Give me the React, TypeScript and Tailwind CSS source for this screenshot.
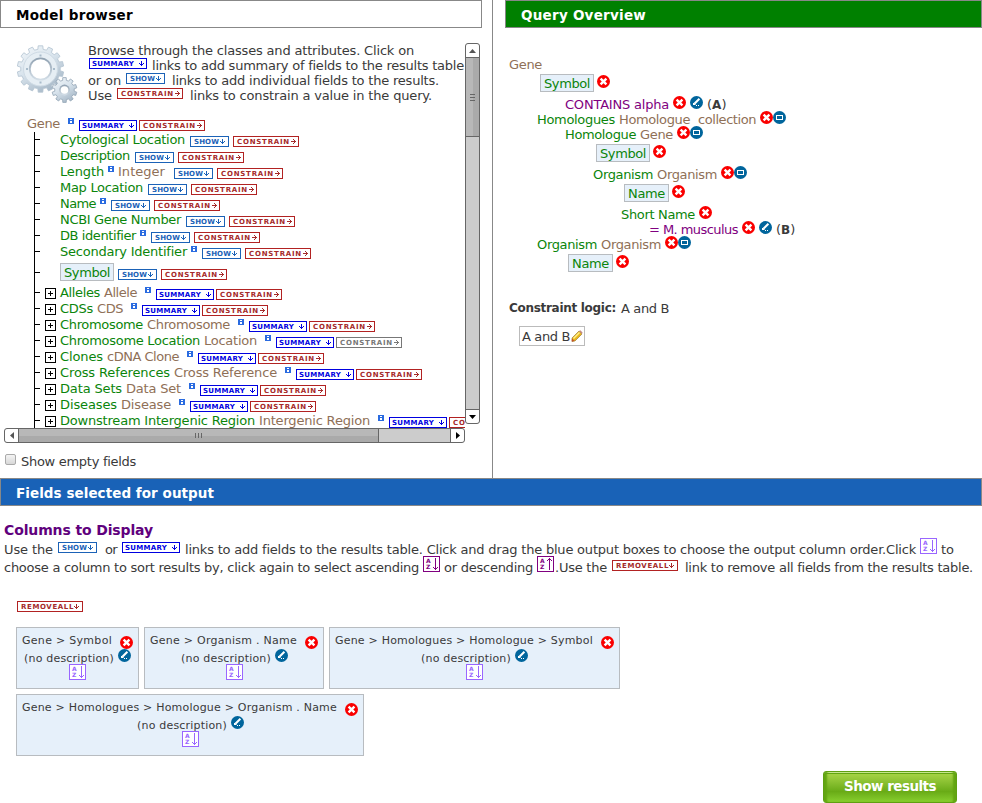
import React, { useLayoutEffect, useRef } from "react";

/* A single line of text, spaced evenly so that it fills its box. */
function Fit({ className = "", children }: { className?: string; children: string }) {
  const box = useRef<HTMLSpanElement>(null);
  const text = useRef<HTMLSpanElement>(null);
  useLayoutEffect(() => {
    if (!box.current || !text.current) return;
    text.current.style.letterSpacing = "0px";
    const natural = text.current.getBoundingClientRect().width;
    const gap = (box.current.getBoundingClientRect().width - natural) / children.length;
    text.current.style.letterSpacing = `${gap}px`;
  }, [children]);
  return (
    <span ref={box} className={`block shrink-0 whitespace-pre ${className}`}>
      <span ref={text}>{children}</span>
    </span>
  );
}

const GREEN = "text-[#0b850b]";
const BROWN = "text-[#8f7057]";
const PURPLE = "text-[#800080]";

function Arrow({ right = false, className = "" }: { right?: boolean; className?: string }) {
  return (
    <svg width="5" height="5" viewBox="0 0 5 5" shapeRendering="crispEdges" className={`shrink-0 ${className}`} fill="currentColor">
      {right ? (
        <path d="M0 2h5v1H0zM3 1h1v3H3zM2 0h1v1H2zM2 4h1v1H2z" />
      ) : (
        <path d="M2 0h1v5H2zM1 3h3v1H1zM0 2h1v1H0zM4 2h1v1H4z" />
      )}
    </svg>
  );
}

type Kind = "summary" | "show" | "constrain" | "remove";

function Tag({ kind, className = "", disabled = false }: { kind: Kind; className?: string; disabled?: boolean }) {
  const base = "flex h-[11px] shrink-0 items-start border bg-white text-[7px] font-bold leading-[9px]";
  if (kind === "summary")
    return (
      <span className={`${base} w-[58px] border-[#0000e0] pl-[2px] text-[#0000e0] ${className}`}>
        <Fit className="w-[42px] pt-[0.5px]">SUMMARY</Fit>
        <Arrow className="ml-[5px] mt-[2px]" />
      </span>
    );
  if (kind === "show")
    return (
      <span className={`${base} w-[39px] border-[#1b62b7] pl-[3px] text-[#1b62b7] ${className}`}>
        <Fit className="w-[25px] pt-[0.5px]">SHOW</Fit>
        <Arrow className="ml-[1px] mt-[2px]" />
      </span>
    );
  if (kind === "remove")
    return (
      <span className={`${base} w-[66px] border-[#b22222] pl-[3px] text-[#a52a2a] ${className}`}>
        <Fit className="w-[53px] pt-[0.5px]">REMOVEALL</Fit>
        <Arrow className="mt-[2px]" />
      </span>
    );
  return (
    <span className={`${base} w-[66px] pl-[3px] ${disabled ? "border-[#777777] text-[#777777]" : "border-[#b22222] text-[#a52a2a]"} ${className}`}>
      <Fit className="w-[53px] pt-[0.5px]">CONSTRAIN</Fit>
      <Arrow right className="ml-[1px] mt-[2px]" />
    </span>
  );
}

function Info({ className = "" }: { className?: string }) {
  return (
    <svg width="6" height="6" viewBox="0 0 6 6" shapeRendering="crispEdges" className={`shrink-0 ${className}`}>
      <rect width="6" height="6" rx="1" fill="#2a6be0" />
      <path d="M2 1h2v1H2zM2 3h2v2H2z" fill="#fff" />
    </svg>
  );
}

function Remove({ className = "" }: { className?: string }) {
  return (
    <svg width="13" height="13" viewBox="0 0 13 13" className={`shrink-0 ${className}`}>
      <circle cx="6.5" cy="6.5" r="6.5" fill="#fa0000" />
      <path d="M3.6 3.6l5.8 5.8M9.4 3.6l-5.8 5.8" stroke="#fff" strokeWidth="2.4" />
    </svg>
  );
}

function Edit({ className = "" }: { className?: string }) {
  return (
    <svg width="13" height="13" viewBox="0 0 13 13" className={`shrink-0 ${className}`}>
      <circle cx="6.5" cy="6.5" r="6.5" fill="#00659c" />
      <path d="M9.4 2.8L4.4 7.8" stroke="#fff" strokeWidth="2" />
      <path d="M3 7h1l1.6 1.6V9H3zM6 9h1v1H6zM8 9h1v1H8z" fill="#fff" />
    </svg>
  );
}

function Box({ className = "" }: { className?: string }) {
  return (
    <svg width="13" height="13" viewBox="0 0 13 13" className={`shrink-0 ${className}`}>
      <circle cx="6.5" cy="6.5" r="6.5" fill="#00659c" />
      <rect x="3.5" y="4.5" width="6" height="4" fill="none" stroke="#fff" />
    </svg>
  );
}

function Sort({ className = "", up = false }: { className?: string; up?: boolean }) {
  return (
    <span className={`flex h-4 w-[17px] shrink-0 border border-current bg-white pl-[2px] pt-[1px] ${className}`}>
      <span className="flex w-[5px] flex-col text-[6px] font-bold leading-[6px]">
        <span>A</span>
        <span>Z</span>
      </span>
      <svg width="7" height="12" viewBox="0 0 7 12" shapeRendering="crispEdges" fill="currentColor" className="ml-[1px]">
        {up ? (
          <path d="M3 0h1v12H3zM2 1h3v1H2zM1 2h1v1H1zM5 2h1v1H5z" />
        ) : (
          <path d="M3 0h1v12H3zM2 10h3v1H2zM1 9h1v1H1zM5 9h1v1H5z" />
        )}
      </svg>
    </span>
  );
}

function gearPath(cx: number, cy: number, teeth: number, outer: number, inner: number) {
  const step = (Math.PI * 2) / teeth;
  const at = (r: number, a: number) => `${(cx + r * Math.cos(a)).toFixed(2)} ${(cy + r * Math.sin(a)).toFixed(2)}`;
  let d = "";
  for (let i = 0; i < teeth; i++) {
    const a = i * step - Math.PI / 2;
    d += `${i ? "L" : "M"}${at(inner, a - step * 0.3)}L${at(outer, a - step * 0.22)}L${at(outer, a + step * 0.22)}L${at(inner, a + step * 0.3)}`;
  }
  return d + "Z";
}

function Gears() {
  return (
    <svg width="62" height="60" viewBox="16 44 62 60" className="shrink-0">
      <defs>
        <linearGradient id="steel" x1="0" y1="0" x2="0.6" y2="1">
          <stop offset="0" stopColor="#f3f7fa" />
          <stop offset="0.5" stopColor="#d9e4ed" />
          <stop offset="1" stopColor="#a9bac9" />
        </linearGradient>
        <linearGradient id="rim" x1="0" y1="0" x2="0" y2="1">
          <stop offset="0" stopColor="#8fa0b0" />
          <stop offset="1" stopColor="#d5e0e9" />
        </linearGradient>
      </defs>
      <path d={gearPath(40.5, 69, 14, 23.3, 19.8)} fill="url(#steel)" stroke="#b3c3d0" strokeWidth="0.8" />
      <circle cx="40.5" cy="69" r="17" fill="#e6eef4" stroke="#cfdbe5" strokeWidth="1" />
      <circle cx="40.5" cy="69" r="11.6" fill="url(#rim)" />
      <circle cx="40.5" cy="69" r="9.8" fill="#fff" />
      <path d="M39.5 54.500h2v2h-2zM39.5 81.500h2v2h-2zM26 68h2v2h-2zM53 68h2v2h-2z" fill="#a9bccb" />
      <path d={gearPath(64.5, 90, 10, 12.5, 9.8)} fill="url(#steel)" stroke="#93a5b5" strokeWidth="0.8" />
      <circle cx="64.5" cy="90" r="5.4" fill="url(#rim)" />
      <circle cx="64.500" cy="90" r="3.8" fill="#fff" />
    </svg>
  );
}

function Plus() {
  return (
    <svg width="11" height="11" viewBox="0 0 11 11" shapeRendering="crispEdges" className="shrink-0">
      <rect x="0.5" y="0.5" width="10" height="10" fill="#fff" stroke="#000" />
      <path d="M3 5h5v1H3zM5 3h1v5H5z" fill="#000" />
    </svg>
  );
}

interface Field {
  name: string;
  w: string;
  type?: string;
  tw?: string;
  info?: string;
  gap: string;
}

const fields: Field[] = [
  { name: "Cytological Location", w: "w-[125px]", gap: "ml-[5px]" },
  { name: "Description", w: "w-[70px]", gap: "ml-[5px]" },
  { name: "Length", w: "w-[44px]", info: "ml-[4px]", type: "Integer", tw: "w-[47px] ml-[4px]", gap: "ml-[9px]" },
  { name: "Map Location", w: "w-[83px]", gap: "ml-[5px]" },
  { name: "Name", w: "w-[36px]", info: "ml-[4px]", gap: "ml-[5px]" },
  { name: "NCBI Gene Number", w: "w-[121px]", gap: "ml-[5px]" },
  { name: "DB identifier", w: "w-[76px]", info: "ml-[4px]", gap: "ml-[5px]" },
  { name: "Secondary Identifier", w: "w-[127px]", info: "ml-[4px]", gap: "ml-[5px]" },
];

const references = [
  { name: "Alleles", w: "w-[40px]", type: "Allele", tw: "w-[33px]" },
  { name: "CDSs", w: "w-[33px]", type: "CDS", tw: "w-[26px]" },
  { name: "Chromosome", w: "w-[83px]", type: "Chromosome", tw: "w-[83px]" },
  { name: "Chromosome Location", w: "w-[140px]", type: "Location", tw: "w-[53px]", disabled: true },
  { name: "Clones", w: "w-[43px]", type: "cDNA Clone", tw: "w-[72px]" },
  { name: "Cross References", w: "w-[110px]", type: "Cross Reference", tw: "w-[103px]" },
  { name: "Data Sets", w: "w-[62px]", type: "Data Set", tw: "w-[55px]" },
  { name: "Diseases", w: "w-[57px]", type: "Disease", tw: "w-[50px]" },
  { name: "Downstream Intergenic Region", w: "w-[195px]", type: "Intergenic Region", tw: "w-[111px]" },
];

function Branch({ children, tall = false }: { children: React.ReactNode; tall?: boolean }) {
  return (
    <div className={`flex items-start ${tall ? "h-[25px]" : "h-4"}`}>
      <i className={`h-px w-[5px] shrink-0 bg-black ${tall ? "mt-[12px]" : "mt-[7px]"}`} />
      {children}
    </div>
  );
}

function Chip({ name, className = "" }: { name: string; className?: string }) {
  return (
    <span className={`flex h-[18px] shrink-0 items-center border border-[#b8bcc0] bg-[#e6f0fa] pl-[3px] leading-[15px] ${GREEN} ${name === "Name" ? "w-[45px]" : "w-[54px]"} ${className}`}>
      <Fit className={name === "Name" ? "w-[37px]" : "w-[46px]"}>{name}</Fit>
    </span>
  );
}

function Heading({ children, w, className }: { children: string; w: string; className: string }) {
  return (
    <h2 className={`flex h-7 shrink-0 items-start border border-[#888888] pl-[15px] pt-[5px] text-[13.5px] font-bold leading-[18px] ${className}`}>
      <Fit className={w}>{children}</Fit>
    </h2>
  );
}

function ModelBrowser() {
  return (
    <section className="h-[478px] w-[493px] shrink-0 border-r border-[#888888]">
      <Heading w="w-[117px]" className="w-[482px] text-black">Model browser</Heading>
      <div className="mt-[15px] flex pl-1">
        <div className="h-[385px] w-[461px] overflow-hidden">
          <div className="flex h-[73px]">
            <div className="w-[84px] shrink-0 pl-3 pt-[1px]"><Gears /></div>
            <div className="leading-[15px]">
              <div className="flex h-[15px]"><Fit className="w-[326px]">Browse through the classes and attributes. Click on</Fit></div>
              <div className="flex h-[15px]">
                <Tag kind="summary" className="ml-[1px]" />
                <Fit className="ml-[5px] w-[312px]">links to add summary of fields to the results table</Fit>
              </div>
              <div className="flex h-[15px]">
                <Fit className="w-[33px]">or on</Fit>
                <Tag kind="show" className="ml-[5px]" />
                <Fit className="ml-[7px] w-[267px]">links to add individual fields to the results.</Fit>
              </div>
              <div className="flex h-[15px]">
                <Fit className="w-[24px]">Use</Fit>
                <Tag kind="constrain" className="ml-[5px]" />
                <Fit className="ml-[7px] w-[242px]">links to constrain a value in the query.</Fit>
              </div>
            </div>
          </div>
          <div className="flex h-4 pl-[23px] leading-[15px]">
            <Fit className={`w-[33px] ${BROWN}`}>Gene</Fit>
            <Info className="ml-[8px] mt-[2px]" />
            <Tag kind="summary" className="ml-[5px] mt-[4px]" />
            <Tag kind="constrain" className="ml-[2px] mt-[4px]" />
          </div>
          <div className="ml-[30px] border-l border-black leading-[15px]">
            {fields.map((f) => (
              <Branch key={f.name}>
                <Fit className={`ml-[20px] ${f.w} ${GREEN}`}>{f.name}</Fit>
                {f.info && <Info className={`mt-[2px] ${f.info}`} />}
                {f.type && <Fit className={`${f.tw} ${BROWN}`}>{f.type}</Fit>}
                <Tag kind="show" className={`mt-[4px] ${f.gap}`} />
                <Tag kind="constrain" className="ml-[4px] mt-[4px]" />
              </Branch>
            ))}
            <Branch tall>
              <Chip name="Symbol" className="ml-[20px] mt-[3px]" />
              <Tag kind="show" className="ml-[4px] mt-[9px]" />
              <Tag kind="constrain" className="ml-[4px] mt-[9px]" />
            </Branch>
            {references.map((r) => (
              <Branch key={r.name}>
                <span className="ml-[5px] mt-[3px] flex"><Plus /></span>
                <Fit className={`ml-[4px] ${r.w} ${GREEN}`}>{r.name}</Fit>
                <Fit className={`ml-[4px] ${r.tw} ${BROWN}`}>{r.type}</Fit>
                <Info className="ml-[8px] mt-[2px]" />
                <Tag kind="summary" className="ml-[5px] mt-[4px]" />
                <Tag kind="constrain" className="ml-[2px] mt-[4px]" disabled={r.disabled} />
              </Branch>
            ))}
          </div>
        </div>
        <div className="flex h-[381px] w-[15px] flex-col rounded-[3px] border border-[#666666] bg-[#cccccc]">
          <span className="flex h-[14px] items-center justify-center rounded-t-[3px] border-b border-[#666666] bg-white">
            <svg width="7" height="4"><path d="M3.5 0L7 4H0z" fill="#555" /></svg>
          </span>
          <span className="flex h-[79px] items-center justify-center border-b border-[#666666] bg-linear-to-r from-[#b8b8b8] from-50% to-[#aaaaaa] to-50%">
            <svg width="5" height="7" fill="#666"><path d="M0 0h5v1H0zM0 3h5v1H0zM0 6h5v1H0z" /></svg>
          </span>
          <span className="mt-auto flex h-[14px] items-center justify-center rounded-b-[3px] border-t border-[#666666] bg-white">
            <svg width="7" height="4"><path d="M3.5 4L7 0H0z" /></svg>
          </span>
        </div>
      </div>
      <div className="ml-1 flex h-[15px] w-[461px] rounded-[3px] border border-[#666666] bg-[#cccccc]">
        <span className="flex w-[14px] items-center justify-center rounded-l-[3px] border-r border-[#666666] bg-white">
          <svg width="4" height="7"><path d="M4 0v7L0 3.5z" fill="#555" /></svg>
        </span>
        <span className="flex w-[360px] items-center justify-center border-r border-[#666666] bg-linear-to-b from-[#b8b8b8] from-50% to-[#aaaaaa] to-50%">
          <svg width="7" height="5" fill="#666"><path d="M0 0h1v5H0zM3 0h1v5H3zM6 0h1v5H6z" /></svg>
        </span>
        <span className="ml-auto flex w-[14px] items-center justify-center rounded-r-[3px] border-l border-[#666666] bg-white">
          <svg width="4" height="7"><path d="M0 0v7l4-3.5z" /></svg>
        </span>
      </div>
      <div className="mt-[11px] flex pl-[5px] leading-[15px]">
        <span className="h-[11px] w-[11px] rounded-[2px] border border-[#aaaaaa] bg-linear-to-b from-[#f4f4f4] to-[#d8d8d8]" />
        <Fit className="ml-[5px] w-[115px]">Show empty fields</Fit>
      </div>
    </section>
  );
}

function QueryOverview() {
  const row = "flex h-[15px]";
  const chipRow = "flex h-[25px] pt-[2px]";
  return (
    <section className="flex-1 pl-3">
      <Heading w="w-[125px]" className="bg-[#008000] text-white">Query Overview</Heading>
      <div className="pl-1 pt-[29px] leading-[15px]">
        <div className={row}><Fit className={`w-[33px] ${BROWN}`}>Gene</Fit></div>
        <div className={`${chipRow} pl-[31px]`}><Chip name="Symbol" /><Remove className="ml-[3px] mt-[1px]" /></div>
        <div className={`${row} pl-[56px]`}>
          <Fit className={`w-[104px] ${PURPLE}`}>CONTAINS alpha</Fit>
          <Remove className="-mt-px ml-[4px]" />
          <Edit className="-mt-px ml-[4px]" />
          <span className="ml-[4px]">(<b className="text-[12px]">A</b>)</span>
        </div>
        <div className={`${row} pl-[28px]`}>
          <Fit className={`w-[78px] ${GREEN}`}>Homologues</Fit>
          <Fit className={`ml-[4px] w-[71px] ${BROWN}`}>Homologue</Fit>
          <Fit className={`ml-[8px] w-[58px] ${BROWN}`}>collection</Fit>
          <Remove className="-mt-px ml-[4px]" /><Box className="-mt-px" />
        </div>
        <div className={`${row} pl-[56px]`}>
          <Fit className={`w-[71px] ${GREEN}`}>Homologue</Fit>
          <Fit className={`ml-[4px] w-[33px] ${BROWN}`}>Gene</Fit>
          <Remove className="-mt-px ml-[4px]" /><Box className="-mt-px" />
        </div>
        <div className={`${chipRow} pl-[87px]`}><Chip name="Symbol" /><Remove className="ml-[3px] mt-[1px]" /></div>
        <div className={`${row} pl-[84px]`}>
          <Fit className={`w-[60px] ${GREEN}`}>Organism</Fit>
          <Fit className={`ml-[4px] w-[60px] ${BROWN}`}>Organism</Fit>
          <Remove className="-mt-px ml-[4px]" /><Box className="-mt-px" />
        </div>
        <div className={`${chipRow} pl-[115px]`}><Chip name="Name" /><Remove className="ml-[3px] mt-[1px]" /></div>
        <div className={`${row} pl-[112px]`}>
          <Fit className={`w-[74px] ${GREEN}`}>Short Name</Fit>
          <Remove className="-mt-px ml-[4px]" />
        </div>
        <div className={`${row} pl-[140px]`}>
          <Fit className={`w-[89px] ${PURPLE}`}>= M. musculus</Fit>
          <Remove className="-mt-px ml-[4px]" />
          <Edit className="-mt-px ml-[4px]" />
          <span className="ml-[4px]">(<b className="text-[12px]">B</b>)</span>
        </div>
        <div className={`${row} pl-[28px]`}>
          <Fit className={`w-[60px] ${GREEN}`}>Organism</Fit>
          <Fit className={`ml-[4px] w-[60px] ${BROWN}`}>Organism</Fit>
          <Remove className="-mt-px ml-[4px]" /><Box className="-mt-px" />
        </div>
        <div className={`${chipRow} pl-[59px]`}><Chip name="Name" /><Remove className="ml-[3px] mt-[1px]" /></div>
        <div className="mt-[24px] flex">
          <Fit className="w-[107px] text-[12px] font-bold">Constraint logic:</Fit>
          <Fit className="ml-[5px] w-[48px]">A and B</Fit>
        </div>
        <div className="ml-[10px] mt-[10px] flex h-5 w-[66px] items-center border border-[#bbbbbb] pl-[2px]">
          <Fit className="w-[48px]">A and B</Fit>
          <svg width="12" height="12" viewBox="0 0 12 12" className="ml-[1px]">
            <path d="M1 8L8 1l3 3-7 7-3 .5z" fill="#e8b71d" stroke="#7d5a20" strokeWidth="0.5" />
            <path d="M2.5 8.5l6-6" stroke="#fff08a" strokeWidth="1.4" />
            <path d="M8 1l1.3-.7 2.3 2.3L11 4z" fill="#c58a80" />
            <path d="M.7 11.500L1 8.500l2.500 2.500z" fill="#c4512a" />
          </svg>
        </div>
      </div>
    </section>
  );
}

const cards = [
  { name: "Gene > Symbol", w: "w-[123px]", tw: "w-[90px]", pad: "pl-[7px]", sort: "ml-[52px]" },
  { name: "Gene > Organism . Name", w: "w-[180px]", tw: "w-[147px]", pad: "pl-[36px]", sort: "ml-[81px]" },
  { name: "Gene > Homologues > Homologue > Symbol", w: "w-[291px]", tw: "w-[258px]", pad: "pl-[91px]", sort: "ml-[136px]" },
  { name: "Gene > Homologues > Homologue > Organism . Name", w: "w-[348px]", tw: "w-[315px]", pad: "pl-[120px]", sort: "ml-[165px]" },
];

function OutputFields() {
  return (
    <section className="flex flex-col">
      <Heading w="w-[198px]" className="bg-[#1962b7] text-white">Fields selected for output</Heading>
      <h3 className="mt-[15px] pl-1 text-[14px] font-bold leading-[18px] text-[#60007d]"><Fit className="w-[149px]">Columns to Display</Fit></h3>
      <div className="pl-1 leading-[18px]">
        <div className="flex h-[18px] pt-[2px]">
          <Fit className="w-[49px]">Use the</Fit>
          <Tag kind="show" className="ml-[5px] mt-[1px]" />
          <Fit className="ml-[8px] w-[12px]">or</Fit>
          <Tag kind="summary" className="ml-[5px] mt-[1px]" />
          <Fit className="ml-[5px] w-[731px]">links to add fields to the results table. Click and drag the blue output boxes to choose the output column order.Click</Fit>
          <Sort className="-mt-[3px] ml-[4px] text-[#9966ff]" />
          <Fit className="ml-[4px] w-[13px]">to</Fit>
        </div>
        <div className="flex h-[18px] pt-[2px]">
          <Fit className="w-[415px]">choose a column to sort results by, click again to select ascending</Fit>
          <Sort className="-mt-[3px] ml-[4px] text-[#800080]" />
          <Fit className="ml-[4px] w-[89px]">or descending</Fit>
          <Sort up className="-mt-[3px] ml-[4px] text-[#800080]" />
          <Fit className="ml-[1px] w-[52px]">.Use the</Fit>
          <Tag kind="remove" className="ml-[5px] mt-[1px]" />
          <Fit className="ml-[7px] w-[288px]">link to remove all fields from the results table.</Fit>
        </div>
      </div>
      <Tag kind="remove" className="ml-[17px] mt-[26px]" />
      <div className="mt-[15px] flex w-[640px] flex-wrap gap-[5px] pl-4">
        {cards.map((c) => (
          <div key={c.name} className={`h-[62px] border border-[#b8bcc0] bg-[#e6f0fa] pt-[5px] text-[11px] leading-[15px] ${c.w}`}>
            <div className="flex h-4 pl-[5px]">
              <Fit className={c.tw}>{c.name}</Fit>
              <Remove className="ml-[8px] mt-[3px]" />
            </div>
            <div className={`flex h-[15px] ${c.pad}`}>
              <Fit className="mt-[2px] w-[90px]">(no description)</Fit>
              <Edit className="ml-[4px]" />
            </div>
            <Sort className={`text-[#9966ff] ${c.sort}`} />
          </div>
        ))}
      </div>
      <button className="ml-[823px] mt-[15px] flex h-8 w-[134px] items-start justify-center rounded-[3px] border border-[#5fa012] bg-linear-to-b from-[#a2d142] from-10% via-[#69ab16] via-65% to-[#88cf2e] pt-[5px] text-[13.5px] font-bold leading-[18px] text-white shadow-[inset_4px_0_2px_-1px_#62a511,inset_-4px_0_2px_-1px_#62a511,inset_0_1px_0_#d3eda0,inset_0_2px_0_#62a511]">
        <Fit className="w-[92px]">Show results</Fit>
      </button>
    </section>
  );
}

export default function App() {
  return (
    <main className="h-[803px] w-[982px] overflow-hidden bg-white font-['DejaVu_Sans',sans-serif] text-[13px] text-[#3a3a3a]">
      <div className="flex">
        <ModelBrowser />
        <QueryOverview />
      </div>
      <OutputFields />
    </main>
  );
}
